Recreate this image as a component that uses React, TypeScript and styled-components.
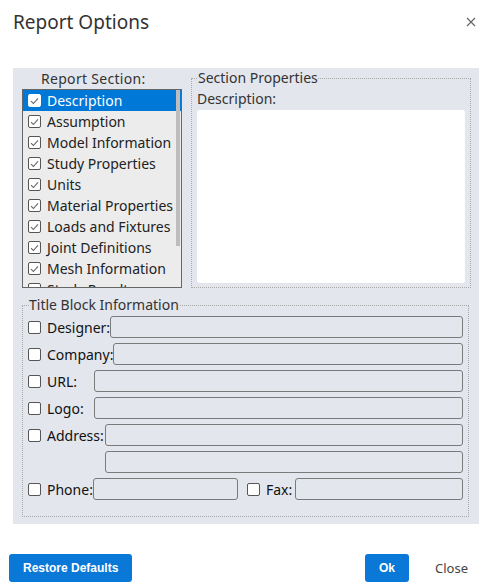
import React from 'react';
import styled, { createGlobalStyle } from 'styled-components';

const GlobalStyle = createGlobalStyle`
  html, body { margin: 0; padding: 0; background: #fff; }
  body { font-family: "Noto Sans", "Open Sans", Arial, sans-serif; color: #222; }
`;

const Dialog = styled.div`
  width: 490px;
  height: 588px;
  box-sizing: border-box;
  display: flex;
  flex-direction: column;
`;

const Header = styled.div`
  height: 68px;
  display: flex;
  align-items: flex-start;
  justify-content: space-between;
  padding: 9px 12px 0 13px;
  box-sizing: border-box;
`;

const Title = styled.h1`
  margin: 0;
  font-size: 19px;
  font-weight: 400;
  color: #333;
  line-height: 26px;
`;

const CloseX = styled.button`
  border: none;
  background: none;
  padding: 0;
  margin-top: 6px;
  width: 14px;
  height: 14px;
  cursor: pointer;
`;

const Panel = styled.div`
  margin: 0 11px 0 13px;
  height: 456px;
  background: #e3e6ed;
  padding: 2px 8px 7px 9px;
  box-sizing: border-box;
  display: flex;
  flex-direction: column;
`;

const TopRow = styled.div`
  display: flex;
  gap: 9px;
  height: 218px;
`;

const SectionColumn = styled.div`
  width: 160px;
  display: flex;
  flex-direction: column;
`;

const ColumnLabel = styled.div`
  font-size: 14px;
  line-height: 17px;
  margin: 0 0 2px 19px;
  letter-spacing: 0.3px;
  color: #333;
`;

const ListBox = styled.div`
  position: relative;
  width: 160px;
  height: 200px;
  box-sizing: border-box;
  border: 1px solid #666;
  background: #ececec;
  overflow: hidden;
`;

const ListRow = styled.div<{ $selected?: boolean }>`
  height: 21px;
  display: flex;
  align-items: center;
  gap: 6px;
  padding-left: 5px;
  font-size: 14px;
  white-space: nowrap;
  color: ${({ $selected }) => ($selected ? '#fff' : '#222')};
  background: ${({ $selected }) => ($selected ? '#0078d7' : 'transparent')};
`;

const ScrollThumb = styled.div`
  position: absolute;
  right: 1px;
  top: 0;
  width: 4px;
  height: 156px;
  background: #bdbdbd;
`;

const Box = styled.span<{ $onBlue?: boolean }>`
  width: 13px;
  height: 13px;
  flex: none;
  box-sizing: border-box;
  border: 1px solid ${({ $onBlue }) => ($onBlue ? '#fff' : '#555')};
  border-radius: 2px;
  background: #fff;
  display: inline-flex;
  align-items: center;
  justify-content: center;
`;

const Fieldset = styled.fieldset`
  margin: 0;
  border: 1px dotted #a9a9a9;
  min-width: 0;
  box-sizing: border-box;
`;

const Legend = styled.legend`
  font-size: 14px;
  line-height: 16px;
  padding: 0;
  margin-left: 1px;
  color: #333;
`;

const PropsFieldset = styled(Fieldset)`
  flex: 1;
  height: 218px;
  padding: 4px 5px 4px 5px;
  display: flex;
  flex-direction: column;
`;

const PropLabel = styled.div`
  font-size: 14px;
  line-height: 18px;
  color: #333;
`;

const TextArea = styled.div`
  flex: 1;
  background: #fff;
  border-radius: 3px;
  margin-top: 2px;
`;

const TitleFieldset = styled(Fieldset)`
  margin: 9px 2px 0 0;
  height: 220px;
  padding: 3px 5px 0 5px;
  display: flex;
  flex-direction: column;
  gap: 5px;
`;

const FieldRow = styled.div`
  display: flex;
  align-items: center;
  height: 22px;
`;

const CheckLabel = styled.label<{ $width?: number }>`
  display: flex;
  align-items: center;
  gap: 6px;
  font-size: 14px;
  color: #111;
  width: ${({ $width }) => ($width ? `${$width}px` : 'auto')};
  flex: none;
  white-space: nowrap;
`;

const FaxLabel = styled(CheckLabel)`
  margin: 0 3px 0 9px;
`;

const Input = styled.div<{ $width?: number }>`
  height: 22px;
  box-sizing: border-box;
  border: 1px solid #7a7a7a;
  border-radius: 3px;
  ${({ $width }) => ($width ? `width: ${$width}px; flex: none;` : 'flex: 1;')}
`;

const Footer = styled.div`
  flex: 1;
  display: flex;
  align-items: flex-start;
  padding: 30px 22px 0 9px;
  box-sizing: border-box;
`;

const PrimaryButton = styled.button`
  height: 28px;
  padding: 0 14px;
  border: none;
  border-radius: 3px;
  background: #0a78d7;
  color: #fff;
  font-family: "Liberation Sans", Arial, sans-serif;
  font-size: 12px;
  font-weight: 700;
`;

const Spacer = styled.div`
  flex: 1;
`;

const TextButton = styled.button`
  border: none;
  background: none;
  font-family: inherit;
  font-size: 13px;
  color: #444;
  height: 28px;
  margin-left: 26px;
  padding: 0;
`;

const Check = () => (
  <svg width="9" height="8" viewBox="0 0 9 8">
    <path d="M1 4.2 L3.4 6.5 L8 1.3" fill="none" stroke="#666" strokeWidth="1.1" />
  </svg>
);

const sections = [
  'Description',
  'Assumption',
  'Model Information',
  'Study Properties',
  'Units',
  'Material Properties',
  'Loads and Fixtures',
  'Joint Definitions',
  'Mesh Information',
  'Study Results',
];

const App = () => (
  <Dialog>
    <GlobalStyle />
    <Header>
      <Title>Report Options</Title>
      <CloseX aria-label="close">
        <svg width="10" height="10" viewBox="0 0 10 10">
          <path d="M1 1 L9 9 M9 1 L1 9" stroke="#666" strokeWidth="1.2" />
        </svg>
      </CloseX>
    </Header>
    <Panel>
      <TopRow>
        <SectionColumn>
          <ColumnLabel>Report Section:</ColumnLabel>
          <ListBox>
            {sections.map((s, i) => (
              <ListRow key={s} $selected={i === 0}>
                <Box $onBlue={i === 0}>
                  <Check />
                </Box>
                {s}
              </ListRow>
            ))}
            <ScrollThumb />
          </ListBox>
        </SectionColumn>
        <PropsFieldset>
          <Legend>Section Properties</Legend>
          <PropLabel>Description:</PropLabel>
          <TextArea />
        </PropsFieldset>
      </TopRow>
      <TitleFieldset>
        <Legend>Title Block Information</Legend>
        <FieldRow>
          <CheckLabel>
            <Box />
            Designer:
          </CheckLabel>
          <Input />
        </FieldRow>
        <FieldRow>
          <CheckLabel>
            <Box />
            Company:
          </CheckLabel>
          <Input />
        </FieldRow>
        <FieldRow>
          <CheckLabel $width={66}>
            <Box />
            URL:
          </CheckLabel>
          <Input />
        </FieldRow>
        <FieldRow>
          <CheckLabel $width={66}>
            <Box />
            Logo:
          </CheckLabel>
          <Input />
        </FieldRow>
        <FieldRow>
          <CheckLabel $width={77}>
            <Box />
            Address:
          </CheckLabel>
          <Input />
        </FieldRow>
        <FieldRow>
          <CheckLabel $width={77} />
          <Input />
        </FieldRow>
        <FieldRow>
          <CheckLabel>
            <Box />
            Phone:
          </CheckLabel>
          <Input $width={145} />
          <FaxLabel>
            <Box />
            Fax:
          </FaxLabel>
          <Input />
        </FieldRow>
      </TitleFieldset>
    </Panel>
    <Footer>
      <PrimaryButton>Restore Defaults</PrimaryButton>
      <Spacer />
      <PrimaryButton>Ok</PrimaryButton>
      <TextButton>Close</TextButton>
    </Footer>
  </Dialog>
);

export default App;
